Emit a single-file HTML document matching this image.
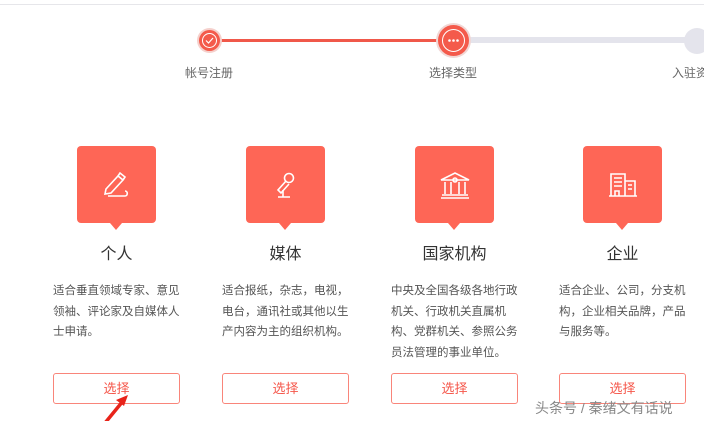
<!DOCTYPE html>
<html><head><meta charset="utf-8"><style>
*{margin:0;padding:0;box-sizing:border-box}
body{width:704px;height:421px;overflow:hidden;background:#fff;position:relative;font-family:"Liberation Sans","Noto Sans CJK SC",sans-serif}
.a{position:absolute}
.lbl{font-size:12px;color:#666;top:64px;white-space:nowrap}
.box{position:absolute;top:146px;width:79px;height:77px;background:#fe6656;border-radius:4px}
.box:after{content:"";position:absolute;left:33px;bottom:-7px;border-left:6px solid transparent;border-right:6px solid transparent;border-top:7px solid #fe6656}
.box svg{position:absolute;left:22px;top:21px}
.t{position:absolute;top:240px;width:79px;text-align:center;font-size:16px;color:#333}
.d{position:absolute;top:281px;width:130px;font-size:11.5px;line-height:20.5px;color:#555}
.b{position:absolute;top:373px;width:127px;height:31px;border:1px solid #f9857a;border-radius:3px;text-align:center;line-height:29px;font-size:13px;color:#f5564a}
</style></head><body>
<div class="a" style="left:0;top:4px;width:704px;height:1px;background:#e6e6ea"></div>
<div class="a" style="left:453px;top:37px;width:251px;height:6px;background:#e4e4ec"></div>
<div class="a" style="left:209px;top:39px;width:244px;height:3px;background:#f0584a"></div>
<div class="a" style="left:199px;top:30px;width:21px;height:21px;border-radius:50%;background:#f45a4b;box-shadow:0 0 0 2px #f5d0cc"></div>
<svg class="a" style="left:199px;top:30px" width="21" height="21"><circle cx="10.5" cy="10.5" r="7" fill="none" stroke="#fff" stroke-width="1"/><path d="M7 10.5l2.5 2.5 4.5-5" fill="none" stroke="#fff" stroke-width="1.2"/></svg>
<div class="a" style="left:438px;top:25px;width:31px;height:31px;border-radius:50%;background:#f45a4b;box-shadow:0 0 0 2px #f1d7d5"></div>
<svg class="a" style="left:438px;top:25px" width="31" height="31"><circle cx="15.5" cy="15.5" r="11" fill="none" stroke="#fff" stroke-width="1"/><circle cx="11.5" cy="15.5" r="1.3" fill="#fff"/><circle cx="15.5" cy="15.5" r="1.3" fill="#fff"/><circle cx="19.5" cy="15.5" r="1.3" fill="#fff"/></svg>
<div class="a" style="left:684px;top:28px;width:26px;height:26px;border-radius:50%;background:#e4e4ec"></div>
<div class="a lbl" style="left:185px">帐号注册</div>
<div class="a lbl" style="left:429px">选择类型</div>
<div class="a lbl" style="left:672px">入驻资</div>

<div class="box" style="left:77px"><svg width="36" height="36" fill="none" stroke="#fff" stroke-width="1.6"><path d="M7 22l12-13 5 4-12 13-6 1z"/><path d="M19 9l2-3 5 4-2 3"/><path d="M9 29h17c3 0 3-5 0-5"/></svg></div>
<div class="box" style="left:246px"><svg width="36" height="36" fill="none" stroke="#fff" stroke-width="1.6"><circle cx="21" cy="11" r="4.5"/><path d="M18 14l-8 9 3 3 8-9"/><path d="M15 23v7M10 30h12"/></svg></div>
<div class="box" style="left:415px"><svg width="36" height="36" fill="none" stroke="#fff" stroke-width="1.6"><path d="M4 13l14-7 14 7z"/><circle cx="18" cy="13" r="2"/><path d="M8 15v12M14 15v12M22 15v12M28 15v12M5 28h26M4 31h28"/></svg></div>
<div class="box" style="left:583px"><svg width="36" height="36" fill="none" stroke="#fff" stroke-width="1.6"><path d="M6 29V7h14v22M20 14h10v15M4 29h28M14 29v-5h-4v5"/><path d="M9 11h8M9 15h8M9 19h8M23 18h4M23 22h4"/></svg></div>

<div class="t" style="left:77px">个人</div>
<div class="t" style="left:246px">媒体</div>
<div class="t" style="left:403px;width:103px">国家机构</div>
<div class="t" style="left:583px">企业</div>

<div class="d" style="left:53px">适合垂直领域专家、意见领袖、评论家及自媒体人士申请。</div>
<div class="d" style="left:222px">适合报纸，杂志，电视，电台，通讯社或其他以生产内容为主的组织机构。</div>
<div class="d" style="left:391px;width:128px">中央及全国各级各地行政机关、行政机关直属机构、党群机关、参照公务员法管理的事业单位。</div>
<div class="d" style="left:559px">适合企业、公司，分支机构，企业相关品牌，产品与服务等。</div>

<div class="b" style="left:53px">选择</div>
<div class="b" style="left:222px">选择</div>
<div class="b" style="left:391px">选择</div>
<div class="b" style="left:559px">选择</div>

<svg class="a" style="left:95px;top:390px" width="40" height="31"><path d="M10 33L28 11" stroke="#e8231a" stroke-width="3.5"/><path d="M33 5l-12 5 8 6z" fill="#e8231a"/></svg>
<div class="a" style="left:535px;top:398px;font-size:14px;color:#888;white-space:nowrap">头条号 / 秦绪文有话说</div>
</body></html>
